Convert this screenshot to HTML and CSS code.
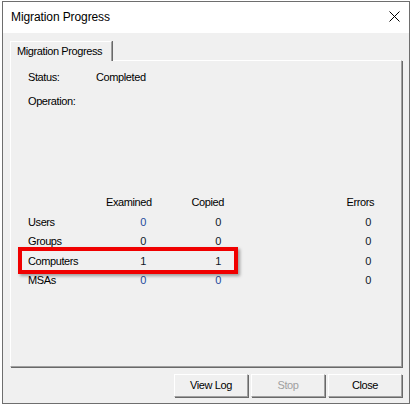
FILE: index.html
```html
<!DOCTYPE html>
<html>
<head>
<meta charset="utf-8">
<link rel="stylesheet" href="styles.css">
</head>
<body>
<div class="window">
  <div class="titlebar">
    <span class="title">Migration Progress</span>
    <svg class="close" width="11" height="11" viewBox="0 0 11 11"><path d="M0.5 0.5 L10.5 10.5 M10.5 0.5 L0.5 10.5" stroke="#000" stroke-width="1" fill="none"/></svg>
  </div>
  <div class="content">
    <div class="tab">Migration Progress</div>
    <div class="panel">
      <div class="info">
        <div class="inforow"><span class="ilabel">Status:</span><span>Completed</span></div>
        <div class="inforow op"><span class="ilabel">Operation:</span><span></span></div>
      </div>
      <div class="tablewrap">
        <div class="stats">
          <div></div><div class="h">Examined</div><div class="h">Copied</div><div class="h">Errors</div>
          <div>Users</div><div class="n e blue">0</div><div class="n c">0</div><div class="n r">0</div>
          <div>Groups</div><div class="n e">0</div><div class="n c">0</div><div class="n r">0</div>
          <div>Computers</div><div class="n e">1</div><div class="n c">1</div><div class="n r">0</div>
          <div>MSAs</div><div class="n e blue">0</div><div class="n c blue">0</div><div class="n r">0</div>
        </div>
        <div class="highlight"></div>
      </div>
    </div>
    <div class="buttons">
      <div class="btn">View Log</div>
      <div class="btn disabled">Stop</div>
      <div class="btn">Close</div>
    </div>
  </div>
</div>
</body>
</html>
```

FILE: styles.css
```css
html, body {
  margin: 0;
  padding: 0;
  background: #ffffff;
}
body {
  font-family: "Liberation Sans", Arial, sans-serif;
  font-size: 11px;
  letter-spacing: -0.4px;
  color: #000;
}
.window {
  box-sizing: border-box;
  margin: 1px 0 0 2px;
  width: 408px;
  height: 403px;
  border: 1px solid #6e6e6e;
  background: #f0f0f0;
  display: flex;
  flex-direction: column;
}
.titlebar {
  height: 31px;
  background: #ffffff;
  display: flex;
  align-items: center;
  justify-content: space-between;
  padding: 0 9px 0 8px;
  flex: none;
}
.title {
  font-size: 12px;
  letter-spacing: -0.1px;
  margin-top: -2px;
}
.close {
  display: block;
  margin-top: -3px;
}
.content {
  padding: 8px 7px 0 7px;
  display: flex;
  flex-direction: column;
}
.tab {
  box-sizing: border-box;
  align-self: flex-start;
  width: 102px;
  height: 20px;
  padding: 2px 0 0 6px;
  line-height: 14px;
  background: #f0f0f0;
  border-left: 1px solid #ffffff;
  border-top: 1px solid #ffffff;
  border-right: 1px solid #a0a0a0;
  box-shadow: 1px 0 0 #696969;
  position: relative;
  z-index: 1;
  margin-bottom: -1px;
}
.panel {
  box-sizing: border-box;
  width: 392px;
  height: 307px;
  border-left: 1px solid #ffffff;
  border-top: 1px solid #ffffff;
  border-right: 1px solid #a0a0a0;
  border-bottom: 1px solid #a0a0a0;
  box-shadow: 1px 1px 0 #696969;
  padding: 9px 0 0 17px;
}
.inforow {
  display: flex;
  line-height: 14px;
  height: 14px;
}
.inforow.op {
  margin-top: 10px;
}
.ilabel {
  width: 68px;
}
.tablewrap {
  position: relative;
  margin-top: 85px;
}
.stats {
  display: grid;
  grid-template-columns: 78px 45px 73px 150px;
  grid-auto-rows: 19.5px;
  line-height: 19.5px;
}
.h {
  text-align: right;
}
.n {
  text-align: right;
  color: #101828;
}
.n.e { padding-right: 5px; }
.n.c { padding-right: 3px; }
.n.r { padding-right: 3px; }
.n.blue { color: #1f4a9c; }
.highlight {
  position: absolute;
  box-sizing: border-box;
  left: -10px;
  top: 54px;
  width: 220px;
  height: 27px;
  border: 4px solid #f00000;
  box-shadow: 2px 2px 3px rgba(0, 0, 0, 0.35);
}
.buttons {
  display: flex;
  justify-content: flex-end;
  gap: 3px;
  margin-top: 7px;
  padding-right: 0;
}
.btn {
  box-sizing: border-box;
  width: 74px;
  height: 23px;
  line-height: 20px;
  text-align: center;
  background: #f0f0f0;
  border-left: 1px solid #ffffff;
  border-top: 1px solid #ffffff;
  border-right: 1px solid #a0a0a0;
  border-bottom: 1px solid #a0a0a0;
  box-shadow: 1px 1px 0 #696969;
}
.btn.disabled {
  color: #a0a0a0;
}
```
